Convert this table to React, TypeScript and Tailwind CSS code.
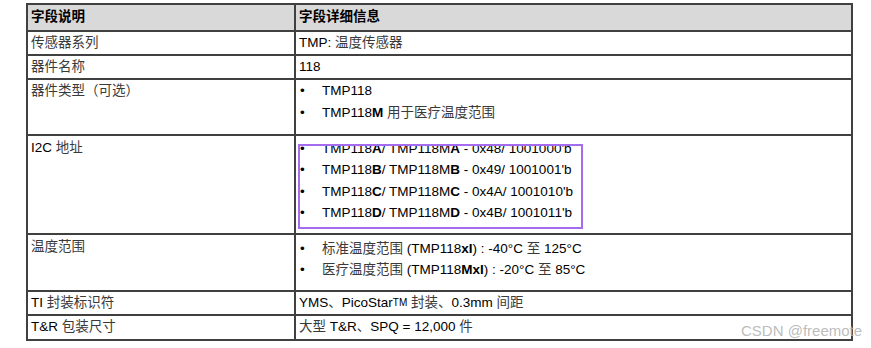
import React from 'react';

// Chinese segments render lighter in the reference
const Z: React.FC<{ children: React.ReactNode }> = ({ children }) => (
  <span className="text-[#3a3a3a]">{children}</span>
);

const Bullet: React.FC<{ children: React.ReactNode }> = ({ children }) => (
  <div className="flex">
    <span className="w-[22px] shrink-0">•</span>
    <span>{children}</span>
  </div>
);

const cell = 'border-r-2 border-b-2 border-[#404040] px-[3px]';

const App: React.FC = () => {
  return (
    <div
      className="relative w-[871px] h-[348px] bg-white text-[13.5px] text-black overflow-hidden"
      style={{ fontFamily: '"Liberation Sans", "Noto Sans CJK SC", sans-serif' }}
    >
      <div className="pt-[3px] pl-[26px]">
        <div className="grid grid-cols-[268px_557px] w-[827px] border-l-2 border-t-2 border-[#404040]">
          {/* header */}
          <div className={`${cell} h-[27px] bg-[#d9d9d9] flex items-center font-bold`}>字段说明</div>
          <div className={`${cell} h-[27px] bg-[#d9d9d9] flex items-center font-bold`}>字段详细信息</div>

          <div className={`${cell} h-[24px] flex items-center`}><Z>传感器系列</Z></div>
          <div className={`${cell} h-[24px] flex items-center`}>
            <span>TMP: <Z>温度传感器</Z></span>
          </div>

          <div className={`${cell} h-[24px] flex items-center`}><Z>器件名称</Z></div>
          <div className={`${cell} h-[24px] flex items-center`}>118</div>

          <div className={`${cell} h-[56px] leading-[22px]`}><Z>器件类型（可选）</Z></div>
          <div className={`${cell} h-[56px] leading-[22px] pl-[4px]`}>
            <Bullet>TMP118</Bullet>
            <Bullet>
              TMP118<b>M</b> <Z>用于医疗温度范围</Z>
            </Bullet>
          </div>

          <div className={`${cell} h-[99px] leading-[21px] pt-[1px]`}>I2C <Z>地址</Z></div>
          <div className={`${cell} h-[99px] leading-[21.3px] pt-[2px] pl-[4px]`}>
            <Bullet>TMP118<b>A</b>/ TMP118M<b>A</b> - 0x48/ 1001000'b</Bullet>
            <Bullet>TMP118<b>B</b>/ TMP118M<b>B</b> - 0x49/ 1001001'b</Bullet>
            <Bullet>TMP118<b>C</b>/ TMP118M<b>C</b> - 0x4A/ 1001010'b</Bullet>
            <Bullet>TMP118<b>D</b>/ TMP118M<b>D</b> - 0x4B/ 1001011'b</Bullet>
          </div>

          <div className={`${cell} h-[57px] leading-[21px] pt-[1px]`}><Z>温度范围</Z></div>
          <div className={`${cell} h-[57px] leading-[21px] pt-[3px] pl-[4px]`}>
            <Bullet>
              <Z>标准温度范围</Z> (TMP118<b>xI</b>) : -40°C <Z>至</Z> 125°C
            </Bullet>
            <Bullet>
              <Z>医疗温度范围</Z> (TMP118<b>MxI</b>) : -20°C <Z>至</Z> 85°C
            </Bullet>
          </div>

          <div className={`${cell} h-[24px] flex items-center`}>
            <span>TI <Z>封装标识符</Z></span>
          </div>
          <div className={`${cell} h-[24px] flex items-center`}>
            <span>
              YMS<Z>、</Z>PicoStar<sup className="text-[10px] relative -top-[1px]">TM</sup> <Z>封装、</Z>0.3mm <Z>间距</Z>
            </span>
          </div>

          <div className={`${cell} h-[25px] flex items-center`}>
            <span>T&amp;R <Z>包装尺寸</Z></span>
          </div>
          <div className={`${cell} h-[25px] flex items-center`}>
            <span>
              <Z>大型</Z> T&amp;R<Z>、</Z>SPQ = 12,000 <Z>件</Z>
            </span>
          </div>
        </div>
      </div>

      {/* annotation box over the I2C address list */}
      <div className="absolute left-[298px] top-[144px] w-[285px] h-[85px] border-2 border-[#a56cf0]" />

      {/* watermark */}
      <div className="absolute left-[741px] top-[322px] text-[15px] leading-[18px] text-[#b4b4b4]/90">
        CSDN @freemote
      </div>
    </div>
  );
};

export default App;
